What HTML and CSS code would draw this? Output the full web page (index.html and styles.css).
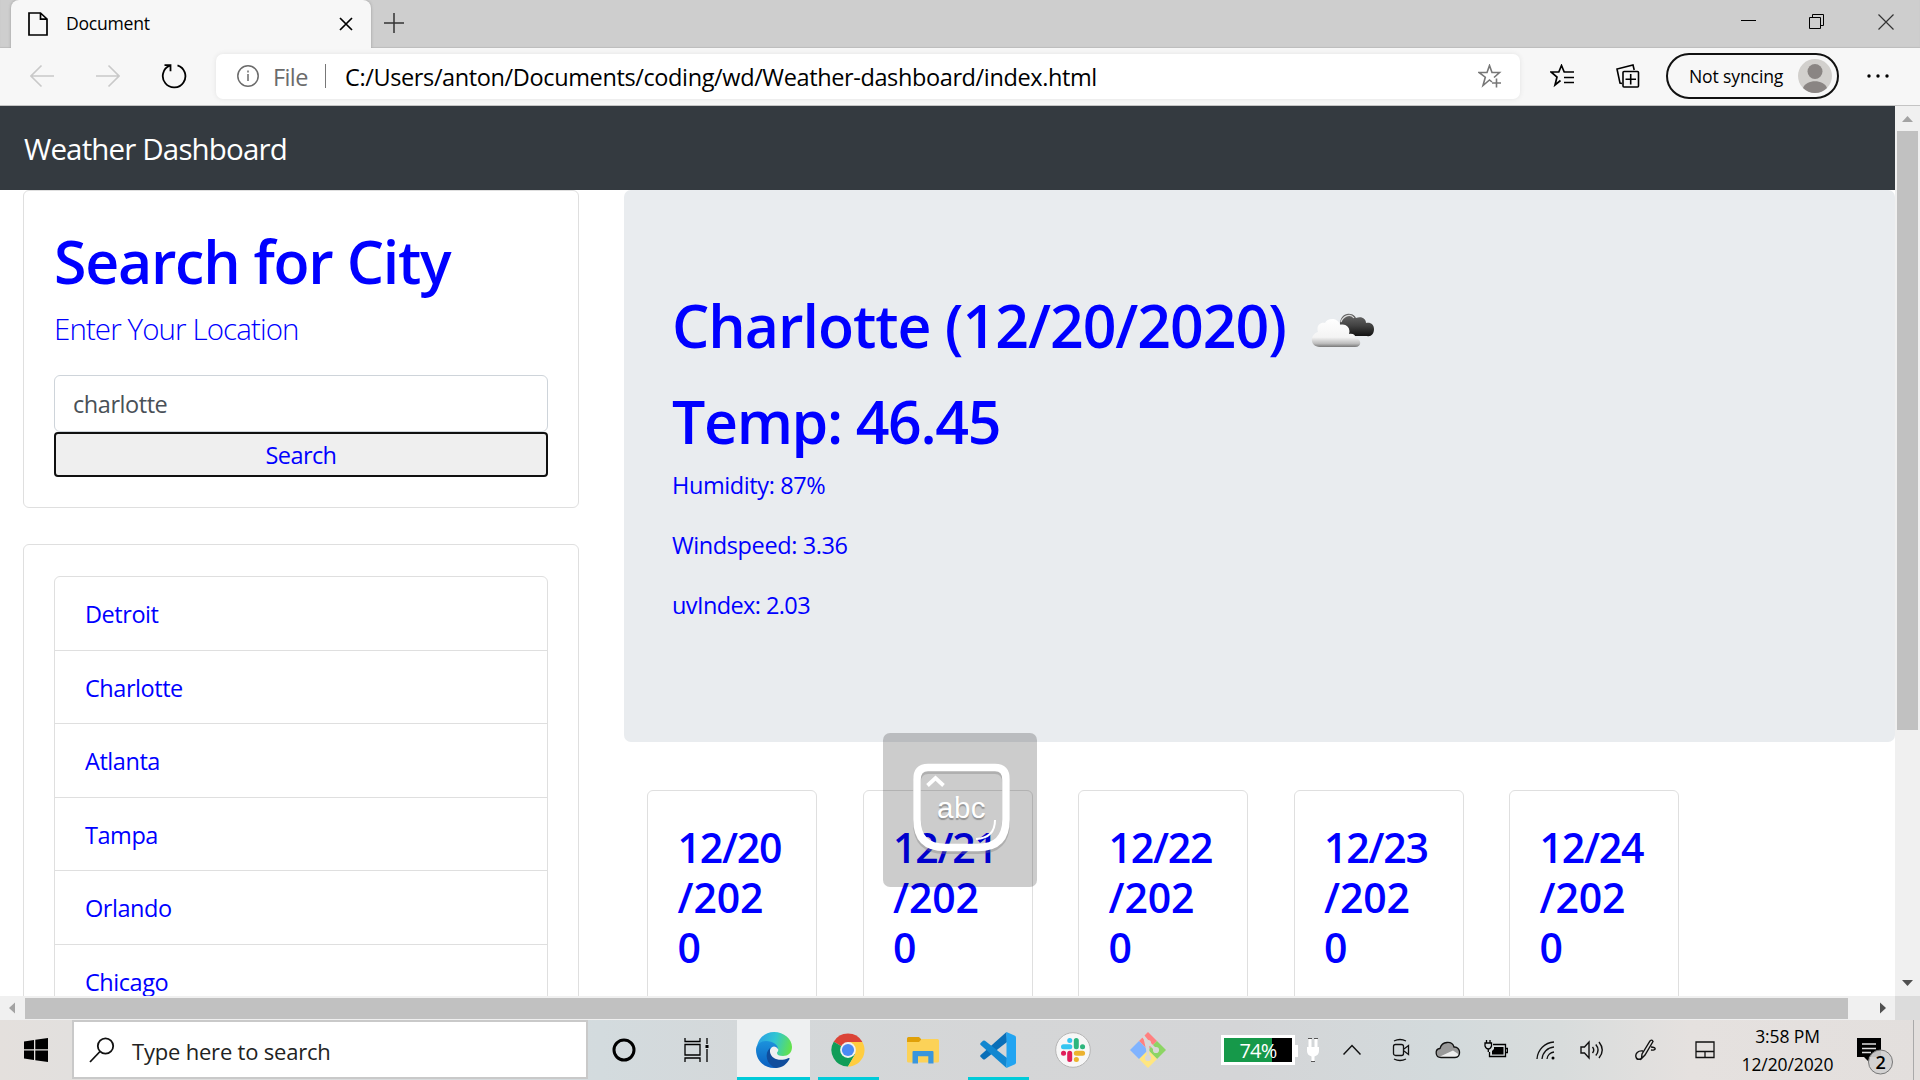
FILE: index.html
```html
<!DOCTYPE html>
<html lang="en">
<head>
<meta charset="utf-8">
<title>Document</title>
<link rel="stylesheet" href="styles.css">
</head>
<body>
<header class="titlebar">
  <div class="tab">
    <svg class="tab-doc" width="20" height="24" viewBox="0 0 20 24" fill="none" stroke="#000" stroke-width="1.7"><path d="M1 1h11.500l6.500 6v16H1zM12.500 1v6.200H19"/></svg>
    <span class="tab-title">Document</span>
    <svg class="tab-close" width="14" height="14" viewBox="0 0 14 14" stroke="#000" stroke-width="1.700"><path d="M1 1l12 12M13 1L1 13"/></svg>
  </div>
  <svg class="new-tab" width="20" height="20" viewBox="0 0 20 20" stroke="#333" stroke-width="1.500"><path d="M10 0v20M0 10h20"/></svg>
  <div class="window-buttons">
    <svg width="15" height="16" viewBox="0 0 15 16"><path d="M0 6.500h15" stroke="#000"/></svg>
    <svg width="16" height="16" viewBox="0 0 16 16" fill="none" stroke="#000"><path d="M.5 3.500h11v11H.5zM3.500 3.500v-3h11v11h-3"/></svg>
    <svg width="16" height="16" viewBox="0 0 16 16" stroke="#333" stroke-width="1.200"><path d="M.5.5l15 15M15.500.5l-15 15"/></svg>
  </div>
</header>
<div class="toolbar">
  <svg class="nav-icon" width="24" height="24" viewBox="0 0 24 24" fill="none" stroke="#c9c9c9" stroke-width="1.600"><path d="M24 12H1M11.500 1.500L1 12l10.500 10.500"/></svg>
  <svg class="nav-icon" width="24" height="24" viewBox="0 0 24 24" fill="none" stroke="#c9c9c9" stroke-width="1.600"><path d="M0 12h23M12.500 1.500L23 12 12.500 22.500"/></svg>
  <svg class="nav-icon refresh" width="26" height="26" viewBox="0 0 26 26" fill="none" stroke="#000" stroke-width="1.800"><path d="M16.500 2.300A11.300 11.300 0 1 1 8.600 2.700M3.500 2.200h6v6"/></svg>
  <div class="address">
    <svg width="22" height="22" viewBox="0 0 22 22" fill="none" stroke="#6b6b6b" stroke-width="1.500"><circle cx="11" cy="11" r="10.200"/><path d="M11 9v7M11 5.500v2"/></svg>
    <span class="scheme">File</span>
    <span class="divider"></span>
    <span class="url">C:/Users/anton/Documents/coding/wd/Weather-dashboard/index.html</span>
    <svg class="star" width="24" height="24" viewBox="0 0 24 24" fill="none" stroke="#777" stroke-width="1.600"><path d="M14 18l-2.500-2-6.500 5.500 2.300-8.300L1 8.500h8L11.500 1.500 14 8.500h7.500L16 13.500M18.500 14.500v9M14 19h9"/></svg>
  </div>
  <svg class="fav" width="25" height="24" viewBox="0 0 25 24" fill="none" stroke="#000" stroke-width="1.700"><path d="M10.500 16.500L5 21l2-8-6-5h7.800L11.500 1.500l2.700 6.500H24M14 13.500h10M14 18.500h10"/></svg>
  <svg class="coll" width="24" height="24" viewBox="0 0 24 24" fill="none" stroke="#000" stroke-width="1.600"><rect x="7" y="7.500" width="15.500" height="15.500" rx="1"/><path d="M14.700 10v10.500M9.500 15.200H20M6 19.500l-2-.4L1 5 17 1l1.200 5"/></svg>
  <div class="profile"><span>Not syncing</span>
    <svg width="34" height="34" viewBox="0 0 34 34"><circle cx="17" cy="17" r="17" fill="#d2d0cd"/><circle cx="17" cy="12.500" r="7.500" fill="#8a8583"/><path d="M5 29c3-9 21-9 24 0a17 17 0 0 1-24 0z" fill="#8a8583"/></svg>
  </div>
  <svg class="dots" width="22" height="4" viewBox="0 0 22 4"><circle cx="2" cy="2" r="1.700"/><circle cx="11" cy="2" r="1.700"/><circle cx="20" cy="2" r="1.700"/></svg>
</div>

<div class="viewport">
  <div class="page">
    <nav class="navbar">Weather Dashboard</nav>
    <main class="columns">
      <aside class="sidebar">
        <section class="card search-card">
          <h1>Search for City</h1>
          <p class="lead">Enter Your Location</p>
          <div class="field">charlotte</div>
          <button class="search-button">Search</button>
        </section>
        <section class="card history">
          <ul class="cities">
            <li>Detroit</li><li>Charlotte</li><li>Atlanta</li><li>Tampa</li><li>Orlando</li><li>Chicago</li>
          </ul>
        </section>
      </aside>
      <section class="content">
        <div class="jumbotron">
          <h1 class="city">Charlotte (12/20/2020)
            <svg class="cloud" width="64" height="36" viewBox="0 0 64 36">
              <defs>
                <linearGradient id="lightCloud" x1="0" y1="0" x2="0" y2="1"><stop offset="0" stop-color="#fff"/><stop offset=".65" stop-color="#f4f4f4"/><stop offset=".88" stop-color="#bbb"/><stop offset="1" stop-color="#777"/></linearGradient>
                <linearGradient id="darkCloud" x1="0" y1="0" x2="0" y2="1"><stop offset="0" stop-color="#6a6a6a"/><stop offset=".5" stop-color="#444"/><stop offset="1" stop-color="#111"/></linearGradient>
              </defs>
              <path d="M29 12c0-7 5-11 10-10 3 0 5 2 6 4 6-2 10 1 10 5 5-1 8 2 8 6 0 5-3 8-7 7H38z" fill="url(#darkCloud)"/>
              <path d="M9 35c-10 0-11-12-2-15-2-6 2-10 7-9 2-5 13-6 15 2 6-2 11 3 9 9 5-1 7 2 6 4 7 1 7 9 0 9z" fill="url(#lightCloud)"/>
              <path d="M30 10c2-6 9-9 13-4" fill="none" stroke="#ddd" stroke-width="1.200"/>
            </svg>
          </h1>
          <h1 class="temp">Temp: 46.45</h1>
          <p>Humidity: 87%</p>
          <p>Windspeed: 3.36</p>
          <p class="uv">uvIndex: 2.03</p>
        </div>
        <div class="forecast">
          <div class="card day"><h3>12/20<br>/202<br>0</h3></div>
          <div class="card day"><h3>12/21<br>/202<br>0</h3></div>
          <div class="card day"><h3>12/22<br>/202<br>0</h3></div>
          <div class="card day"><h3>12/23<br>/202<br>0</h3></div>
          <div class="card day"><h3>12/24<br>/202<br>0</h3></div>
        </div>
      </section>
    </main>
  </div>
  <div class="vscroll">
    <svg width="25" height="25" viewBox="0 0 25 25"><path d="M7 16l5.500-6 5.500 6z" fill="#a3a3a3"/></svg>
    <div class="vthumb"></div>
    <svg class="down" width="25" height="25" viewBox="0 0 25 25"><path d="M7 9l5.500 6 5.500-6z" fill="#505050"/></svg>
  </div>
</div>
<div class="hscroll">
  <svg width="25" height="24" viewBox="0 0 25 24"><path d="M15 6.500L9 12l6 5.500z" fill="#a3a3a3"/></svg>
  <div class="hthumb"></div>
  <svg class="right" width="25" height="24" viewBox="0 0 25 24"><path d="M10 6.500l6 5.500-6 5.500z" fill="#505050"/></svg>
  <div class="corner"></div>
</div>

<footer class="taskbar">
  <div class="cell start"><svg width="24" height="24" viewBox="0 0 24 24"><path d="M0 3.400l10-1.400v9.300H0zM11.300 1.800L24 0v11.300H11.300zM0 12.600h10V22L0 20.600zM11.300 12.600H24V24l-12.700-1.800z"/></svg></div>
  <div class="searchbox">
    <svg width="26" height="26" viewBox="0 0 26 26" fill="none" stroke="#111" stroke-width="1.800"><circle cx="16.500" cy="9" r="7.700"/><path d="M11 14.500L1 25"/></svg>
    <span>Type here to search</span>
  </div>
  <div class="cell cortana"><svg width="24" height="24" viewBox="0 0 24 24"><circle cx="12" cy="12" r="10" fill="none" stroke="#000" stroke-width="3"/></svg></div>
  <div class="cell cortana"><svg width="25" height="24" viewBox="0 0 25 24" fill="none" stroke="#000" stroke-width="1.300"><path d="M1 0v3.500h15V0M1 6.500h15v10.500H1zM1 24v-4h15v4M23 0v6M23 11v13"/><path d="M21.500 7h3v3h-3z" fill="#000" stroke="none"/></svg></div>
  <div class="cell app active edge">
    <svg width="36" height="36" viewBox="0 0 36 36">
      <defs>
        <linearGradient id="edgeTop" x1="0" y1=".3" x2="1" y2=".5"><stop offset="0" stop-color="#2a9fe6"/><stop offset=".5" stop-color="#30c6d2"/><stop offset="1" stop-color="#63e24c"/></linearGradient>
        <linearGradient id="edgeLeft" x1="0" y1="0" x2="0" y2="1"><stop offset="0" stop-color="#1c92dc"/><stop offset="1" stop-color="#0a5fc0"/></linearGradient>
      </defs>
      <path d="M1 14C3 5 10 0 18 0c10 0 18 7 18 15 0 6-4 9-9 9-4 0-6-1-6-3 0-1 2-2 1-4-1-3-4-5-8-6C8 10 3 12 1 14z" fill="url(#edgeTop)"/>
      <path d="M0 18c0-6 5-9 10-9 7 0 12 4 12 8-2-3-6-4-8 1-2 6 2 13 8 17-1 1-3 1-4 1C8 36 0 28 0 18z" fill="url(#edgeLeft)"/>
      <path d="M14 16c-6 5-4 17 6 20 6 0 11-4 13.500-9 .3-1-.5-1.200-1.500-.7-8 3.500-17 .7-18-6.300z" fill="#104d9c"/>
    </svg>
  </div>
  <div class="cell app running chrome">
    <svg width="34" height="34" viewBox="0 0 34 34"><path d="M17 17L2.700 8.700A16.500 16.500 0 0 1 31.300 8.700z" fill="#db4437"/><path d="M17 17L2.700 8.700A16.500 16.500 0 0 0 17 33.500l7-12z" fill="#109d58"/><path d="M17 8.900h14.400A16.500 16.500 0 0 1 17 33.500l7.200-12.400z" fill="#ffcd40"/><circle cx="17" cy="17" r="7.900" fill="#f1f1f1"/><circle cx="17" cy="17" r="6.100" fill="#4a8af4"/></svg>
  </div>
  <div class="cell app explorer">
    <svg width="32" height="27" viewBox="0 0 32 27"><path d="M0 1.500Q0 0 1.500 0H12l2.500 2.500L12 6H0z" fill="#e0a008"/><path d="M0 5h12l3-3h15.500Q32 2 32 3.500V24q0 1.500-1.500 1.500h-29Q0 25.500 0 24z" fill="#fcd258"/><path d="M5.500 26.500V15q0-1 1-1h19q1 0 1 1v11.500h-5.200v-7.200H11v7.200z" fill="#3a96dd"/></svg>
  </div>
  <div class="cell app running code">
    <svg width="36" height="36" viewBox="0 0 36 36"><path d="M26.500 0L27 10 5 27.200q-1 .7-2 0L.7 25q-1-1 0-2z" fill="#0a6fb8"/><path d="M26.500 36L27 26 5 8.800q-1-.7-2 0L.7 11q-1 1 0 2z" fill="#1287d0"/><path d="M26.500 0L35 3.800q1 .5 1 1.700v25q0 1.200-1 1.700L26.500 36z" fill="#22a4f1"/></svg>
  </div>
  <div class="cell app">
    <svg width="36" height="36" viewBox="0 0 36 36"><circle cx="18" cy="18" r="17.300" fill="#f7f7f7" stroke="#b5b5b5"/><g stroke-width="5" stroke-linecap="round" fill="none"><path d="M14.700 8.500h.1M8.500 14.700h6.300" stroke="#36c5f0"/><path d="M21.300 8.500v6.300M27.500 14.700h.1" stroke="#2eb67d"/><path d="M21.300 21.300h6.300M21.300 27.500h.1" stroke="#ecb22e"/><path d="M14.700 21.300v6.300M8.500 21.300h.1" stroke="#e01e5a"/></g></svg>
  </div>
  <div class="cell app">
    <svg width="36" height="36" viewBox="0 0 36 36"><path d="M18 0l9 9-9 9-9-9z" fill="#ff8080"/><path d="M27 9l9 9-9 9-9-9z" fill="#8cd564"/><path d="M18 18l9 9-9 9-9-9z" fill="#ffe680"/><path d="M9 9l9 9-9 9-9-9z" fill="#80b3ff"/><g stroke="#d8d8d8" stroke-width="2.800" fill="#d8d8d8"><path d="M13 4l5 6v16M18 10l8 8"/><circle cx="18" cy="11" r="1.700"/><circle cx="26" cy="18" r="1.700"/><circle cx="18" cy="26" r="1.700"/></g></svg>
  </div>
  <div class="battery"><span>74%</span></div>
  <div class="cell tray plug"><svg width="14" height="24" viewBox="0 0 14 24"><path d="M2.500 1h3v8h3V1h3v8H13v4q0 4-4.500 5.500V23h-3v-4.500Q1 17 1 13V9h1.500z" fill="#fff"/><path d="M2 .5h4M8 .5h4M5 23.500h4" stroke="#555"/></svg></div>
  <div class="cell tray chevron"><svg width="18" height="12" viewBox="0 0 18 12" fill="none" stroke="#111" stroke-width="1.500"><path d="M.5 10.500L9 1.500l8.500 9"/></svg></div>
  <div class="cell tray meet"><svg width="18" height="24" viewBox="0 0 18 24" fill="none" stroke="#111" stroke-width="1.300"><rect x="1.500" y="6.500" width="10" height="11" rx="2"/><path d="M12 11l4.500-3.500v9L12 13M2 3q6-3 12 0M2 21q6 3 12 0"/></svg></div>
  <div class="cell tray drive"><svg width="26" height="18" viewBox="0 0 26 18"><path d="M6 16.500C0 16.500-.5 8 5 7.500 7 0 17-.5 19 6c7-.5 7.500 10.500 1 10.500z" fill="#999"/><path d="M5 15.500l13-6 6 4q-1 2.500-4 2.500H6z" fill="#eee"/><path d="M6 16.500C0 16.500-.5 8 5 7.500 7 0 17-.5 19 6c7-.5 7.500 10.500 1 10.500z" fill="none" stroke="#111" stroke-width="1.300"/></svg></div>
  <div class="cell tray power"><svg width="24" height="20" viewBox="0 0 24 20" fill="none" stroke="#000" stroke-width="1.300"><path d="M9 4.500h12.500v12H5.500V12M21.500 8.500h2v4h-2"/><path d="M10 7h9.500v7.500H8V11l2-2z" fill="#000" stroke="none"/><path d="M2.500 0v3M6 0v3M1 3h6.500v3q-1 3-3.200 3T1 6zM4.300 9v3"/></svg></div>
  <div class="cell tray wifi"><svg width="19" height="20" viewBox="0 0 19 20" fill="none" stroke="#111" stroke-width="1.300"><path d="M1 19A18 18 0 0 1 18 2M6 19A13 13 0 0 1 18 7M11 19a8 8 0 0 1 7-7"/><circle cx="17" cy="18" r="1.500" fill="#000" stroke="none"/></svg></div>
  <div class="cell tray volume"><svg width="24" height="20" viewBox="0 0 24 20" fill="none" stroke="#111" stroke-width="1.400"><path d="M1 7h3.500L9 2v16l-4.500-5H1zM12.500 7q2.500 3 0 6M15.800 4.500q4.500 5.500 0 11M19 2q6.500 8 0 16"/></svg></div>
  <div class="cell tray pen"><svg width="22" height="22" viewBox="0 0 22 22" fill="none" stroke="#111" stroke-width="1.400"><path d="M7 15L15 2q2-2 3 .5L10 16l-3.500 3.500zM8 12c-5-1-8 3-7 6 1 4 6 2 6 0M16 8c6 0 5 4 0 3"/></svg></div>
  <div class="cell tray touchpad"><svg width="20" height="18" viewBox="0 0 20 18" fill="none" stroke="#111" stroke-width="1.300"><path d="M1 1h18v15.500H1zM1 10.500h18M10 10.500v6"/></svg></div>
  <div class="clock"><div>3:58 PM</div><div>12/20/2020</div></div>
  <div class="notice">
    <svg width="40" height="40" viewBox="0 0 40 40"><path d="M3 2h24v19H15v5l-5-5H3z"/><path d="M8 8h14M8 12.500h14M8 16.500h9" stroke="#ddd" stroke-width="1.300"/><circle cx="26.500" cy="26" r="12" fill="#d2d1d1" fill-opacity=".93" stroke="#777"/></svg>
    <span class="badge">2</span>
  </div>
</footer>

<div class="key-overlay">
  <svg width="155" height="155" viewBox="0 0 155 155" fill="none">
    <path d="M45 35.500h67q11 0 11 12v40q0 28-28 28H62q-28 0-28-28v-40q0-12 11-12z" stroke="#777" stroke-opacity=".35" stroke-width="8" transform="translate(0 1.500)"/>
    <path d="M45 34.500h67q11 0 11 12v40q0 28-28 28H62q-28 0-28-28v-40q0-12 11-12z" stroke="#fff" stroke-width="7.500"/>
    <path d="M44.500 52.500l8-7.500 8 7.500" stroke="#fff" stroke-width="3.800"/>
    <path d="M112 87q0 18-19 19" stroke="#fff" stroke-width="2"/>
  </svg>
  <span class="key-text">abc</span>
</div>
</body>
</html>
```
FILE: styles.css
```css
* { box-sizing: border-box; }
body {
  margin: 0;
  width: 1920px;
  height: 1080px;
  overflow: hidden;
  display: flex;
  flex-direction: column;
  font-family: "Open Sans", "Noto Sans", sans-serif;
  font-size: 23.5px;
  letter-spacing: -0.25px;
  line-height: 36px;
  background: #fff;
  position: relative;
}
svg { display: block; flex: none; }
h1, h3, p, ul { margin: 0; padding: 0; }

/* Browser frame */
.titlebar { height: 48px; flex: none; display: flex; background: #cecece; box-shadow: inset 0 -1px 1px #bdbdbd; padding-left: 11px; }
.tab { width: 360px; display: flex; align-items: center; background: #f7f7f7; border-radius: 8px 8px 0 0; padding: 0 18px 0 17px; box-shadow: 0 0 3px #999; clip-path: inset(0 -4px 0 -4px); }
.tab-title { font-size: 17.6px; letter-spacing: -0.25px; margin-left: 18px; padding-bottom: 2px; flex: 1; }
.new-tab { margin: 13px 0 0 13px; }
.window-buttons { margin: 14px 26px 0 auto; display: flex; gap: 53px; }
.toolbar { height: 58px; flex: none; display: flex; align-items: center; background: #f7f7f7; border-bottom: 1px solid #c4c4c4; padding: 0 0 1px 30px; }
.nav-icon { margin-right: 42px; }
.nav-icon.refresh { margin: 0 29px 0 -1px; }
.address { width: 1304px; height: 45px; display: flex; align-items: center; background: #fff; border-radius: 7px; box-shadow: 0 0 5px #e2e2e2; padding: 0 18px 0 21px; }
.scheme { color: #6b6b6b; margin-left: 14px; width: 52px; letter-spacing: -0.6px; }
.divider { width: 1px; height: 24px; background: #777; margin-right: 19px; }
.url { flex: 1; letter-spacing: -0.38px; }
.scheme, .url { padding-top: 1px; }
.fav { margin-left: 30px; }
.coll { margin-left: 41px; }
.profile { width: 173px; height: 46px; margin-left: 26px; border: 2px solid #111; border-radius: 23px; display: flex; align-items: center; justify-content: space-between; padding: 0 5px 0 21px; font-size: 17.6px; letter-spacing: -0.15px; }
.dots { margin-left: 28px; }

/* Page area */
.viewport { height: 890px; flex: none; display: flex; }
.page { width: 1895px; height: 890px; overflow: hidden; color: #00f; }
.navbar { height: 84px; background: #343a40; color: #fff; font-size: 29.5px; letter-spacing: -0.85px; line-height: 85px; padding-left: 24px; }
.columns { display: flex; gap: 45px; padding-left: 23px; }
.sidebar { width: 556px; }
.card { border: 1.5px solid #dfdfdf; border-radius: 6px; background: #fff; }
h1 { font-size: 59px; font-weight: 600; line-height: 72px; letter-spacing: -1.25px; }
.search-card { height: 318px; padding: 34px 30px 0; }
.lead { font-size: 29.5px; font-weight: 300; line-height: 40px; letter-spacing: -0.9px; margin-top: 12px; }
.field { height: 57px; margin-top: 26px; border: 1.5px solid #ced4da; border-radius: 6px; color: #495057; padding-left: 18px; line-height: 57px; letter-spacing: -0.45px; }
.search-button { display: block; width: 100%; height: 45px; border: 2.5px solid #101010; border-radius: 4px; background: #efefef; color: #00f; font: inherit; letter-spacing: -0.6px; padding: 0; }
.history { margin-top: 36px; padding: 31px 30px 0; height: 500px; }
.cities { list-style: none; border: 1px solid #dfdfdf; border-radius: 6px 6px 0 0; letter-spacing: -0.45px; }
.cities li { height: 73.500px; line-height: 75px; padding-left: 30px; border-bottom: 1.500px solid #dfdfdf; }

.content { flex: 1; }
.jumbotron { height: 552px; background: #e9ecef; border-radius: 7px; padding: 99px 48px 0; }
.city { display: flex; letter-spacing: -1.02px; }
.cloud { margin: 23px 0 0 25px; }
.temp { margin-top: 24px; letter-spacing: -1.35px; }
.jumbotron p { margin-bottom: 24px; letter-spacing: -0.4px; }
.jumbotron .uv { letter-spacing: -0.6px; }
.temp + p { margin-top: 10px; }
.forecast { display: flex; gap: 45.500px; padding: 48px 0 0 23px; }
.day { width: 170px; height: 300px; padding: 31px 0 0 29.5px; }
h3 { font-size: 41px; font-weight: 600; line-height: 50px; letter-spacing: -0.1px; }
h3::first-line { letter-spacing: -1.2px; }

/* Scrollbars */
.vscroll { width: 25px; background: #f0f0f0; display: flex; flex-direction: column; align-items: center; }
.vthumb { width: 21px; height: 599px; background: #c1c1c1; }
.down { margin-top: auto; }
.hscroll { height: 24px; flex: none; display: flex; align-items: center; background: #f0f0f0; }
.hthumb { width: 1823px; height: 21px; background: #c1c1c1; }
.right { margin-left: 22px; }
.corner { width: 25px; height: 24px; background: #dcdcdc; }

/* Taskbar */
.taskbar { height: 60px; flex: none; display: flex; background: linear-gradient(90deg, #e4e0dd 0, #e2e0de 70px, #d3dbde 600px, #d4d8da 740px, #d5d6d7 1000px, #d4d5d7 1240px, #d3dadc 1440px, #d8dcdc 1560px, #e5e1df 1690px, #e3dfdd 1920px); }
.cell { display: flex; align-items: center; justify-content: center; flex: none; }
.start, .cortana { width: 72px; }
.searchbox { width: 516px; height: 59px; border: 2px solid #c9c9c9; background: #fff; display: flex; align-items: center; padding-left: 15px; gap: 17px; font-size: 22px; letter-spacing: -0.2px; color: #222; }
.searchbox span { padding-top: 3px; }
.app { width: 75px; position: relative; }
.edge { width: 73px; margin-left: 5px; background: #eef0f1; }
.running::after, .active::after { content: ""; position: absolute; bottom: 0; left: 8px; width: 61px; height: 3px; background: #00cbd9; }
.active::after { left: 0; width: 73px; }
.battery { width: 74px; height: 30px; margin: 15px 0 0 36px; border: 3px solid #fff; background: linear-gradient(90deg, #16994a 70%, #000 70%); color: #fff; font-size: 20px; line-height: 26px; letter-spacing: -0.8px; text-align: center; position: relative; }
.battery::after { content: ""; position: absolute; right: -6px; top: 7px; width: 4px; height: 12px; background: #fff; }
.plug { width: 36px; }
.chevron { width: 42px; }
.meet { width: 56px; }
.drive { width: 38px; }
.power { width: 58px; }
.wifi { width: 40px; }
.volume, .pen { width: 54px; }
.touchpad { width: 64px; }
.clock { width: 102px; text-align: center; font-size: 17.5px; line-height: 28px; padding: 2px 1px 0 0; letter-spacing: -0.1px; }
.notice { width: 75px; padding: 16px 0 0 15px; border-right: 1px solid #aaa; position: relative; }
.badge { position: absolute; left: 35px; top: 29px; width: 13px; font-size: 18px; font-weight: 600; line-height: 26px; text-align: center; }

/* Keyboard state overlay */
.key-overlay { position: absolute; left: 883px; top: 733px; width: 154px; height: 154px; border-radius: 7px; background: rgba(0, 0, 0, .2); }
.key-text { position: absolute; left: 54px; top: 59px; font: 29.500px/32px "Liberation Sans", Arial, sans-serif; letter-spacing: 0.5px; color: #fff; text-shadow: 0 1.500px 1px rgba(90, 90, 90, .5); }
```
